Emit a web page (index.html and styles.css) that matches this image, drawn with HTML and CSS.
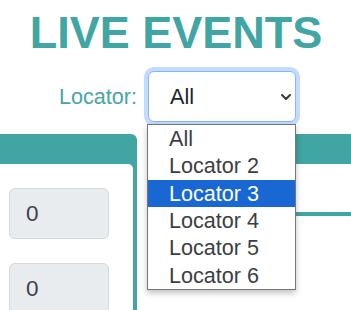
FILE: index.html
```html
<!DOCTYPE html>
<html>
<head>
<meta charset="utf-8">
<link rel="stylesheet" href="styles.css">
</head>
<body>
<div class="page">
  <h1 class="title">LIVE EVENTS</h1>
  <div class="filter">
    <span class="filter-label">Locator:</span>
    <div class="select">
      <span class="select-value">All</span>
      <svg class="chevron" width="10" height="6" viewBox="0 0 10 6"><path d="M1 1l4 4 4-4" fill="none" stroke="#343a40" stroke-width="2" stroke-linecap="round" stroke-linejoin="round"/></svg>
      <ul class="options">
        <li class="option">All</li>
        <li class="option">Locator 2</li>
        <li class="option option-active">Locator 3</li>
        <li class="option">Locator 4</li>
        <li class="option">Locator 5</li>
        <li class="option">Locator 6</li>
      </ul>
    </div>
  </div>
  <div class="cards">
    <div class="card card-left">
      <div class="card-header"></div>
      <div class="card-body">
        <div class="field">0</div>
        <div class="field">0</div>
      </div>
    </div>
    <div class="card card-right">
      <div class="card-header"></div>
      <div class="card-body-right">
        <div class="rule"></div>
      </div>
    </div>
  </div>
</div>
</body>
</html>
```

FILE: styles.css
```css
* { box-sizing: border-box; }
html, body { margin: 0; padding: 0; background: #fff; }
body {
  font-family: "Liberation Sans", Arial, sans-serif;
  width: 351px;
  height: 310px;
  overflow: hidden;
}
.page { width: 351px; height: 310px; overflow: hidden; }
.title {
  margin: 8px 0 0;
  padding-left: 1px;
  font-size: 45px;
  line-height: 50px;
  font-weight: bold;
  color: #41a5a3;
  text-align: center;
}
.filter {
  margin-top: 13px;
  display: flex;
  justify-content: center;
  align-items: center;
  gap: 11px;
  padding-left: 4px;
}
.filter-label {
  font-size: 21.6px;
  color: #45a6a6;
}
.select {
  position: relative;
  width: 148px;
  height: 51px;
  border: 1px solid #86b7fe;
  border-radius: 6px;
  box-shadow: 0 0 0 4px #c2dbfe;
  display: flex;
  align-items: center;
  padding-left: 21px;
  background: #fff;
}
.select-value {
  flex: 1;
  font-size: 21.6px;
  color: #212529;
}
.chevron { margin-right: 4px; margin-top: 1px; }
.options {
  position: absolute;
  left: -2px;
  top: 52px;
  width: 149px;
  margin: 0;
  padding: 0;
  list-style: none;
  background: #fff;
  border: 1px solid #767676;
  box-shadow: 0 3px 6px rgba(0,0,0,0.25);
  z-index: 5;
}
.option {
  height: 27.35px;
  line-height: 27.35px;
  padding-left: 21px;
  font-size: 21.6px;
  color: #3b3f44;
  white-space: nowrap;
}
.option-active {
  background: #1967d2;
  color: #fff;
}
.cards {
  margin-top: 12px;
  display: flex;
  gap: 12px;
  height: 176px;
}
.card {
  background: #41a5a3;
  display: flex;
  flex-direction: column;
}
.card-left {
  width: 137px;
  padding-right: 4px;
  border-radius: 0 6px 0 0;
  flex: none;
}
.card-header { height: 30px; flex: none; }
.card-body {
  flex: 1;
  background: #fff;
  border-radius: 0 5px 0 0;
  padding: 24px 0 0 9px;
  display: flex;
  flex-direction: column;
  gap: 24px;
}
.field {
  width: 100px;
  height: 51px;
  flex: none;
  background: #e9ecef;
  border: 1px solid #d3d8dd;
  border-radius: 6px;
  padding-left: 16px;
  display: flex;
  align-items: center;
  font-size: 22.5px;
  color: #3a4250;
}
.card-right {
  flex: 1;
  border-radius: 6px 0 0 0;
}
.card-body-right {
  flex: 1;
  background: #fff;
}
.rule {
  margin-top: 48px;
  height: 4px;
  background: #41a5a3;
}
```
